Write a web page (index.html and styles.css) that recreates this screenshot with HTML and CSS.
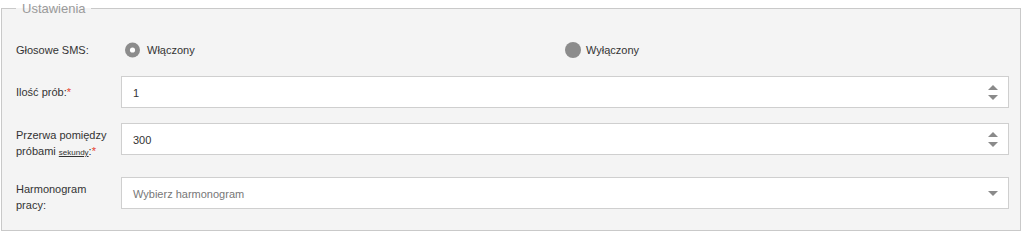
FILE: index.html
```html
<!DOCTYPE html>
<html lang="pl">
<head>
<meta charset="utf-8">
<title>Ustawienia</title>
<link rel="stylesheet" href="styles.css">
</head>
<body>
<div class="page">
  <fieldset class="settings">
    <legend class="settings-legend">Ustawienia</legend>
    <div class="form">
      <div class="row row-radio">
        <label class="lbl">Głosowe SMS:</label>
        <div class="radio-group">
          <label class="radio-opt">
            <svg class="radio" viewBox="0 0 16 16" width="16" height="16"><circle cx="7.5" cy="8" r="7.5" fill="#8c8c8c"/><circle cx="7.5" cy="8" r="2.6" fill="#fff"/></svg>
            <span>Włączony</span>
          </label>
          <label class="radio-opt">
            <svg class="radio" viewBox="0 0 16 16" width="16" height="16"><circle cx="8" cy="8" r="8" fill="#8c8c8c"/></svg>
            <span>Wyłączony</span>
          </label>
        </div>
      </div>

      <div class="row">
        <label class="lbl lbl-single">Ilość prób:<span class="req">*</span></label>
        <div class="field">
          <input class="field-input" type="text" value="1">
          <span class="spin"><span class="tri-up"></span><span class="tri-down"></span></span>
        </div>
      </div>

      <div class="row">
        <label class="lbl lbl-multi">Przerwa pomiędzy próbami <abbr class="unit">sekundy</abbr>:<span class="req">*</span></label>
        <div class="field">
          <input class="field-input" type="text" value="300">
          <span class="spin"><span class="tri-up"></span><span class="tri-down"></span></span>
        </div>
      </div>

      <div class="row">
        <label class="lbl lbl-multi">Harmonogram pracy:</label>
        <div class="field">
          <span class="placeholder">Wybierz harmonogram</span>
          <span class="spin"><span class="tri-down"></span></span>
        </div>
      </div>
    </div>
  </fieldset>
</div>
</body>
</html>
```
FILE: styles.css
```css
html, body {
  margin: 0;
  padding: 0;
  background: #fff;
}

body {
  font-family: "Liberation Sans", Arial, sans-serif;
  font-size: 11px;
  line-height: 16px;
  color: #333;
}

.page {
  padding: 0 3px 2px 1px;
}

.settings {
  margin: 0;
  border: 1px solid #c9c9c9;
  background: #f4f4f4;
  padding: 21px 11px 14px 14px;
  min-width: 0;
}

.settings-legend {
  padding: 0 5px 0 6px;
  font-size: 13px;
  line-height: 17px;
  color: #9a9a9a;
}

.form {
  display: flex;
  flex-direction: column;
  gap: 15px;
}

.row {
  display: grid;
  grid-template-columns: 105px 1fr;
  align-items: start;
}

.row-radio {
  min-height: 23px;
  align-items: center;
}

.lbl {
  display: block;
  padding-right: 8px;
  color: #333;
}

.lbl-single {
  padding-top: 8px;
}

.lbl-multi {
  padding-top: 4px;
  padding-bottom: 3px;
}

.req {
  color: #e5412e;
}

.unit {
  font-size: 8px;
  line-height: 1;
  text-decoration: underline;
  color: #333;
}

.radio-group {
  display: grid;
  grid-template-columns: 1fr 1fr;
  padding: 0 4px;
}

.radio-opt {
  display: flex;
  align-items: center;
  gap: 5px;
  color: #333;
}

.radio {
  display: block;
  flex: none;
}

.radio-opt:first-child .radio {
  margin-right: 1px;
}

.field {
  display: flex;
  align-items: center;
  height: 32px;
  box-sizing: border-box;
  border: 1px solid #cfcfcf;
  background: #fff;
}

.field-input {
  flex: 1;
  min-width: 0;
  height: 100%;
  box-sizing: border-box;
  border: 0;
  margin: 0;
  padding: 2px 0 0 11px;
  background: transparent;
  font-family: "Liberation Sans", Arial, sans-serif;
  font-size: 11px;
  color: #333;
  outline: none;
}

.placeholder {
  flex: 1;
  padding: 2px 0 0 11px;
  color: #777;
}

.spin {
  display: flex;
  flex-direction: column;
  align-items: center;
  gap: 5px;
  width: 11px;
  margin-right: 10px;
}

.tri-up {
  width: 0;
  height: 0;
  border-left: 5px solid transparent;
  border-right: 5px solid transparent;
  border-bottom: 5px solid #8a8a8a;
}

.tri-down {
  width: 0;
  height: 0;
  border-left: 5px solid transparent;
  border-right: 5px solid transparent;
  border-top: 5px solid #8a8a8a;
}
```
